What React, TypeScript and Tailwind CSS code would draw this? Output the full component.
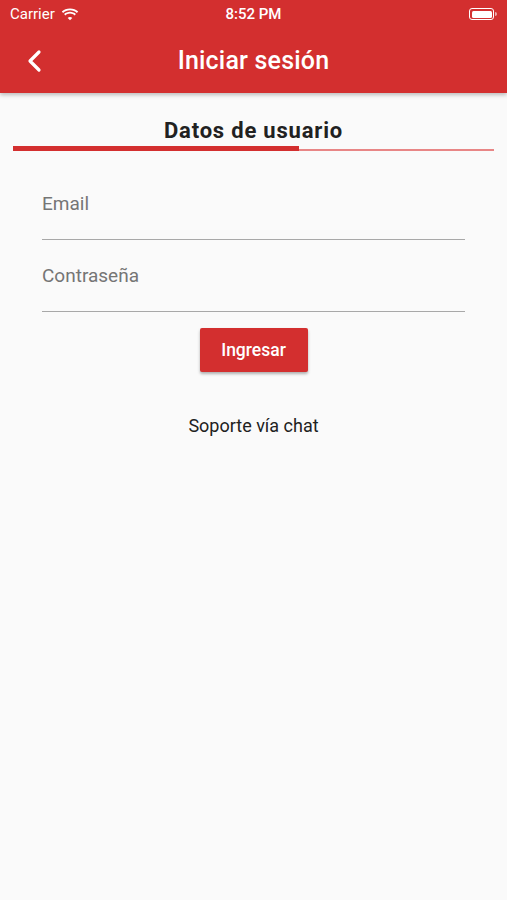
export default function App() {
    return (
        <div className="w-[507px] h-[900px] bg-[#fafafa] flex flex-col" style={{ fontFamily: 'Roboto, "Liberation Sans", sans-serif' }}>
            {/* header */}
            <div className="bg-[#d32f2f] text-white shadow-[0_2px_4px_rgba(0,0,0,0.25)] relative z-10">
                <div className="h-[28px] flex items-center justify-between px-[10px] text-[15px]">
                    <div className="flex items-center gap-[6px] w-[120px]">
                        <span>Carrier</span>
                        <svg width="18" height="13" viewBox="0 0 18 13" fill="white">
                            <path d="M9 2.2c2.7 0 5.1 1 6.9 2.7l1.3-1.3C15.1 1.6 12.2.4 9 .4S2.9 1.6.8 3.6l1.3 1.3C3.9 3.2 6.3 2.2 9 2.2z" />
                            <path d="M9 5.6c1.8 0 3.4.7 4.6 1.8l1.3-1.3C13.4 4.7 11.3 3.8 9 3.8S4.6 4.7 3.1 6.1l1.3 1.3C5.6 6.3 7.2 5.6 9 5.6z" />
                            <path d="M9 9c.9 0 1.7.3 2.3.9L9 12.2 6.7 9.9C7.3 9.3 8.1 9 9 9z" />
                        </svg>
                    </div>
                    <span className="font-medium">8:52 PM</span>
                    <div className="w-[120px] flex justify-end items-center">
                        <div className="w-[25px] h-[12px] border border-white rounded-[3px] p-[1.5px]">
                            <div className="w-full h-full bg-white rounded-[1.5px]" />
                        </div>
                        <div className="w-[1.5px] h-[4px] bg-white ml-[1px] opacity-60 rounded-r-sm" />
                    </div>
                </div>
                <div className="h-[65px] flex items-center relative">
                    <div className="pl-[26px] w-[60px]">
                        <svg width="18" height="24" viewBox="0 0 18 24" fill="none" stroke="white" strokeWidth="3.2" strokeLinecap="round" strokeLinejoin="round">
                            <path d="M13 3 L4 12 L13 21" />
                        </svg>
                    </div>
                    <p className="flex-1 text-center text-[25px] font-medium pr-[60px] tracking-[0.2px]">Iniciar sesión</p>
                </div>
            </div>

            {/* tabs */}
            <div className="px-[13px] pt-[23px]">
                <p className="text-center text-[22px] font-bold text-[#212121] leading-[30px] tracking-[0.8px]">Datos de usuario</p>
                <div className="flex items-start">
                    <div className="w-[286px] h-[5px] bg-[#d32f2f]" />
                    <div className="flex-1 h-[2px] mt-[3px] bg-[#e88686]" />
                </div>
            </div>

            {/* form */}
            <div className="px-[42px] pt-[39px]">
                <div className="border-b-[1.5px] border-[#a8a8a8] h-[50px]">
                    <p className="text-[19px] text-[#757575] leading-[28px]">Email</p>
                </div>
                <div className="border-b-[1.5px] border-[#a8a8a8] h-[72px] pt-[22px]">
                    <p className="text-[19px] text-[#757575] leading-[28px]">Contraseña</p>
                </div>
            </div>
            <div className="flex justify-center pt-[16px]">
                <button className="w-[108px] h-[44px] bg-[#d32f2f] text-white text-[17.5px] font-medium rounded-[2px] shadow-[0_2px_3px_rgba(0,0,0,0.3)]">Ingresar</button>
            </div>
            <p className="text-center text-[18px] text-[#212121] mt-[40px]">Soporte vía chat</p>
        </div>
    );
}
